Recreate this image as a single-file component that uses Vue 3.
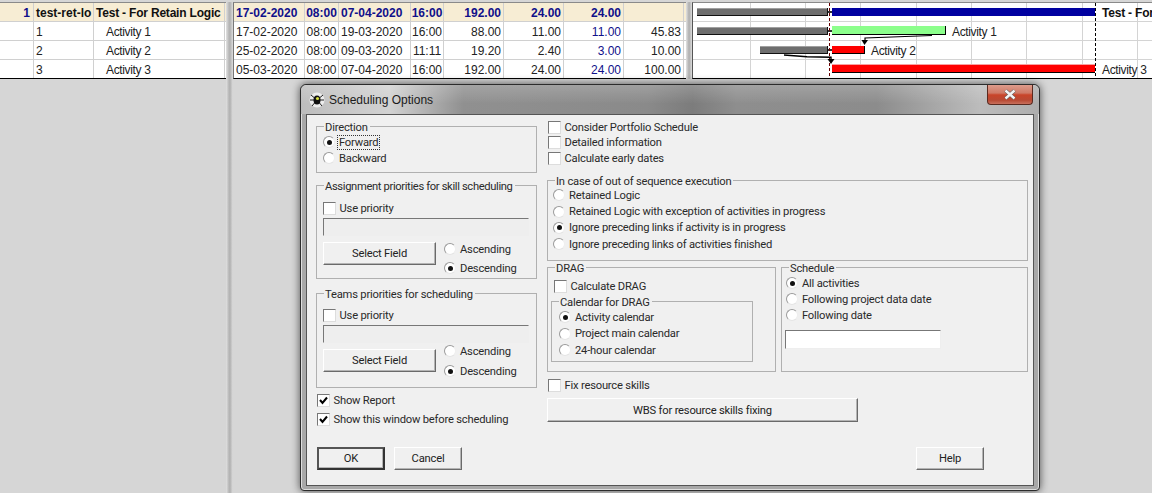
<template>
  <div class="screen">
    <div class="panes">
      <div class="pane left">
        <div v-for="(row, i) in leftRows" :key="i" class="row" :class="{ head: i === 0 }">
          <div class="cell c-id">{{ row[0] }}</div>
          <div class="cell c-code">{{ row[1] }}</div>
          <div class="cell c-name" :class="{ indent: i > 0 }">{{ row[2] }}</div>
        </div>
      </div>
      <div class="splitter full"></div>
      <div class="pane mid">
        <div v-for="(row, i) in midRows" :key="i" class="row" :class="{ head: i === 0 }">
          <div class="cell c-date first">{{ row[0] }}</div>
          <div class="cell c-time">{{ row[1] }}</div>
          <div class="cell c-date">{{ row[2] }}</div>
          <div class="cell c-time short">{{ row[3] }}</div>
          <div class="cell c-num">{{ row[4] }}</div>
          <div class="cell c-num">{{ row[5] }}</div>
          <div class="cell c-num blue">{{ row[6] }}</div>
          <div class="cell c-num">{{ row[7] }}</div>
        </div>
      </div>
      <div class="splitter"></div>
      <div class="pane gantt">
        <svg width="459" height="75" viewBox="693 3 459 75" class="gantt-svg">
          <g stroke="#d4d4d4" stroke-width="1">
            <line v-for="x in gridX" :key="x" :x1="x + 0.5" y1="3" :x2="x + 0.5" y2="78" />
            <line x1="692" y1="21.5" x2="1152" y2="21.5" />
            <line x1="692" y1="40.5" x2="1152" y2="40.5" />
            <line x1="692" y1="59.5" x2="1152" y2="59.5" />
          </g>
          <g v-for="bar in grayBars" :key="bar.y">
            <rect :x="bar.x" :y="bar.y" :width="827 - bar.x" height="8" fill="#6e6e6e" />
            <rect :x="bar.x" :y="bar.y" :width="827 - bar.x" height="1" fill="#a0a0a0" />
            <rect :x="bar.x" :y="bar.y + 7" :width="827 - bar.x" height="1" fill="#111" />
            <rect x="827" :y="bar.y" width="1" height="8" fill="#111" />
            <rect x="828" :y="bar.y + 3" width="4" height="2" fill="#333" />
          </g>
          <rect x="832" y="8" width="263" height="8" fill="#0000a0" />
          <rect x="832" y="26" width="114" height="9" fill="#8cff8c" />
          <rect x="832" y="34" width="114" height="1" fill="#000" />
          <rect x="945" y="26" width="1" height="9" fill="#000" />
          <rect x="832" y="46" width="33" height="8" fill="#f00" />
          <rect x="832" y="53" width="33" height="1" fill="#000" />
          <rect x="864" y="46" width="1" height="8" fill="#000" />
          <rect x="832" y="64" width="263" height="1" fill="#f9a0a0" />
          <rect x="832" y="65" width="263" height="8" fill="#f00" />
          <rect x="832" y="72" width="263" height="1" fill="#000" />
          <line x1="829.5" y1="3" x2="829.5" y2="78" stroke="#600" stroke-dasharray="3 2" />
          <line x1="1095.5" y1="3" x2="1095.5" y2="78" stroke="#000" stroke-dasharray="3 2" />
          <path d="M932 35.5 L865 38 L865 41" fill="none" stroke="#000" stroke-width="1.2" />
          <path d="M861.5 40 L868 40 L864.5 45 Z" fill="#000" />
          <path d="M784 55 L807 56.8 L831 57.2 L831 60" fill="none" stroke="#000" stroke-width="1.4" />
          <path d="M827.5 59 L834.5 59 L831 64 Z" fill="#000" />
          <text x="1102" y="17" class="bar-label bold">Test - For</text>
          <text x="952" y="36" class="bar-label">Activity 1</text>
          <text x="871" y="55" class="bar-label">Activity 2</text>
          <text x="1102" y="74" class="bar-label">Activity 3</text>
        </svg>
      </div>
    </div>

    <div class="dialog">
      <div class="titlebar">
        <svg class="app-icon" width="16" height="16" viewBox="0 0 16 16">
          <circle cx="8" cy="8" r="7.5" fill="#fff" opacity="0.7" />
          <path d="M8 8 L2 3 M8 8 L14 3 M8 8 L1 8 M8 8 L15 8 M8 8 L3 14 M8 8 L13 14" stroke="#222" stroke-width="1" fill="none" />
          <ellipse cx="8" cy="8" rx="3.5" ry="4.5" fill="#111" />
          <circle cx="8.5" cy="6.5" r="1.6" fill="#d8e040" />
        </svg>
        <span class="title-text">Scheduling Options</span>
        <div class="close">
          <svg width="14" height="11" viewBox="0 0 14 11">
            <path d="M2.5 1.5 L11.5 9.5 M11.5 1.5 L2.5 9.5" stroke="#555" stroke-width="3.6" fill="none" />
            <path d="M2.5 1.5 L11.5 9.5 M11.5 1.5 L2.5 9.5" stroke="#f4f4f4" stroke-width="2.4" fill="none" />
          </svg>
        </div>
      </div>
      <div class="body">
        <div class="col-left">
          <div class="group g-direction">
            <span class="legend">Direction</span>
            <label class="opt"><span class="radio on"></span><span class="focus">Forward</span></label>
            <label class="opt"><span class="radio"></span>Backward</label>
          </div>

          <div class="group g-priority">
            <span class="legend tight">Assignment priorities for skill scheduling</span>
            <label class="opt"><span class="check"></span>Use priority</label>
            <div class="field-off"></div>
            <div class="select-row">
              <button class="btn btn-select">Select Field</button>
              <div class="order">
                <label class="opt"><span class="radio"></span>Ascending</label>
                <label class="opt"><span class="radio on"></span>Descending</label>
              </div>
            </div>
          </div>

          <div class="group g-priority g-teams">
            <span class="legend">Teams priorities for scheduling</span>
            <label class="opt"><span class="check"></span>Use priority</label>
            <div class="field-off"></div>
            <div class="select-row">
              <button class="btn btn-select">Select Field</button>
              <div class="order">
                <label class="opt"><span class="radio"></span>Ascending</label>
                <label class="opt"><span class="radio on"></span>Descending</label>
              </div>
            </div>
          </div>

          <div class="bottom-checks">
            <label class="opt"><span class="check"><svg width="9" height="9" viewBox="0 0 9 9"><path d="M1 4 L3.5 7 L8 1.5" fill="none" stroke="#000" stroke-width="2" /></svg></span>Show Report</label>
            <label class="opt"><span class="check"><svg width="9" height="9" viewBox="0 0 9 9"><path d="M1 4 L3.5 7 L8 1.5" fill="none" stroke="#000" stroke-width="2" /></svg></span>Show this window before scheduling</label>
          </div>

          <div class="actions">
            <button class="btn btn-action btn-default">OK</button>
            <button class="btn btn-action">Cancel</button>
          </div>
        </div>

        <div class="col-right">
          <div class="top-checks">
            <label class="opt"><span class="check"></span>Consider Portfolio Schedule</label>
            <label class="opt"><span class="check"></span>Detailed information</label>
            <label class="opt"><span class="check"></span>Calculate early dates</label>
          </div>

          <div class="group g-sequence">
            <span class="legend">In case of out of sequence execution</span>
            <label v-for="(item, i) in sequenceOptions" :key="item" class="opt">
              <span class="radio" :class="{ on: i === 2 }"></span>{{ item }}
            </label>
          </div>

          <div class="two-groups">
            <div class="group g-drag">
              <span class="legend">DRAG</span>
              <label class="opt"><span class="check"></span>Calculate DRAG</label>
              <div class="group g-calendar">
                <span class="legend">Calendar for DRAG</span>
                <label class="opt"><span class="radio on"></span>Activity calendar</label>
                <label class="opt"><span class="radio"></span>Project main calendar</label>
                <label class="opt"><span class="radio"></span>24-hour calendar</label>
              </div>
            </div>
            <div class="group g-schedule">
              <span class="legend">Schedule</span>
              <label class="opt"><span class="radio on"></span>All activities</label>
              <label class="opt"><span class="radio"></span>Following project data date</label>
              <label class="opt"><span class="radio"></span>Following date</label>
              <div class="field-date"></div>
            </div>
          </div>

          <label class="opt fix-row"><span class="check"></span>Fix resource skills</label>
          <button class="btn btn-wbs">WBS for resource skills fixing</button>
          <div class="help-row">
            <button class="btn btn-action">Help</button>
          </div>
        </div>
      </div>
    </div>
  </div>
</template>

<script setup>
const leftRows = [
  ['1', 'test-ret-lo', 'Test - For Retain Logic'],
  ['', '1', 'Activity 1'],
  ['', '2', 'Activity 2'],
  ['', '3', 'Activity 3']
]

const midRows = [
  ['17-02-2020', '08:00', '07-04-2020', '16:00', '192.00', '24.00', '24.00', ''],
  ['17-02-2020', '08:00', '19-03-2020', '16:00', '88.00', '11.00', '11.00', '45.83'],
  ['25-02-2020', '08:00', '09-03-2020', '11:11', '19.20', '2.40', '3.00', '10.00'],
  ['05-03-2020', '08:00', '07-04-2020', '16:00', '192.00', '24.00', '24.00', '100.00']
]

const gridX = [750, 805, 860, 916, 971, 1026, 1082, 1137]

const grayBars = [
  { x: 697, y: 8 },
  { x: 697, y: 27 },
  { x: 760, y: 46 }
]

const sequenceOptions = [
  'Retained Logic',
  'Retained Logic with exception of activities in progress',
  'Ignore preceding links if activity is in progress',
  'Ignore preceding links of activities finished'
]
</script>

<style>
html, body {
  margin: 0;
  background: #d6d6d6;
}
</style>

<style scoped>
.screen {
  position: relative;
  width: 1152px;
  height: 493px;
  overflow: hidden;
  background: #d6d6d6;
  font-family: "Liberation Sans", Arial, sans-serif;
  font-size: 12px;
  color: #222;
}

.panes {
  display: flex;
  align-items: flex-start;
  height: 493px;
  padding-top: 2px;
  box-sizing: border-box;
}

.pane {
  height: 77px;
  background: #fff;
  border-top: 1px solid #8a8a8a;
  border-bottom: 1px solid #000;
  box-sizing: border-box;
  overflow: hidden;
}

.left { width: 226px; }
.mid { width: 453px; border-left: 1px solid #777; }
.gantt { flex: 1; border-left: 1px solid #555; }
.gantt-svg { display: block; }

.splitter {
  width: 6px;
  height: 77px;
  background: linear-gradient(90deg, #e2e2e2, #b4b4b4 45%, #b4b4b4 60%, #dcdcdc);
}

.splitter.full {
  width: 7px;
  height: 491px;
}

.row {
  display: flex;
  height: 19px;
  box-sizing: border-box;
  border-bottom: 1px solid #d0d0d0;
  line-height: 20px;
}

.row:last-child {
  height: 18px;
  border-bottom: 0;
}

.row.head {
  background: #f7edd4;
  font-weight: bold;
  color: #111;
}

.mid .row.head { color: #10108a; }

.cell {
  box-sizing: border-box;
  border-right: 1px solid #d0d0d0;
  white-space: nowrap;
  overflow: hidden;
  padding: 0 3px;
}

.c-id { width: 34px; text-align: right; }
.head .c-id { color: #10108a; }
.c-code { width: 60px; padding-left: 2px; }
.c-name { width: 131px; padding-left: 2px; letter-spacing: -0.2px; }
.c-name.indent { padding-left: 12px; letter-spacing: -0.35px; }
.c-date { width: 72px; padding-left: 2px; }
.c-date.first { width: 71px; }
.c-time { width: 34px; text-align: center; padding: 0; }
.c-time.short { width: 33px; }
.c-num { width: 60px; text-align: right; padding-right: 2px; }
.blue { color: #10108a; }

.bar-label {
  font-size: 12px;
  fill: #222;
  letter-spacing: -0.35px;
  font-family: "Liberation Sans", Arial, sans-serif;
}

.bar-label.bold { font-weight: bold; fill: #111; letter-spacing: -0.2px; }

.dialog {
  position: absolute;
  left: 300px;
  top: 84px;
  width: 740px;
  height: 407px;
  box-sizing: border-box;
  border: 1px solid #2c2c2c;
  border-radius: 6px 6px 4px 4px;
  background: #a8a8a8;
  box-shadow: 0 0 9px rgba(0, 0, 0, 0.65), inset 0 0 0 1px #dedede;
  padding: 0 5px 4px;
  font-family: Roboto, "Liberation Sans", sans-serif;
  font-size: 11.2px;
  letter-spacing: -0.2px;
  color: #2a2a2a;
}

.titlebar {
  display: flex;
  align-items: center;
  height: 29px;
  margin: 0 -5px;
  padding: 0 6px 0 8px;
  border-radius: 6px 6px 0 0;
  background:
    linear-gradient(rgba(255, 255, 255, 0.18), rgba(255, 255, 255, 0) 65%),
    linear-gradient(90deg, #bdbdbd 0%, #d2d2d2 12%, #909090 22%, #8a8a8a 47%, #7c7c7c 53%, #8e8e8e 59%, #8c8c8c 78%, #bcbcbc 92%, #aeaeae 100%);
  position: relative;
}

.app-icon { margin-right: 4px; }

.title-text {
  font-family: "Liberation Sans", Arial, sans-serif;
  font-size: 12px;
  letter-spacing: 0;
  color: #1a1a1a;
}

.close {
  position: absolute;
  right: 6px;
  top: 0;
  width: 46px;
  height: 20px;
  border: 1px solid #5a2a20;
  border-top: 0;
  border-radius: 0 0 4px 4px;
  box-sizing: border-box;
  background: linear-gradient(#dd9c8c 0%, #cf7a66 42%, #c9452a 52%, #b84a34 80%, #c8705c 100%);
  display: flex;
  align-items: center;
  justify-content: center;
}

.body {
  display: flex;
  gap: 10px;
  height: 372px;
  box-sizing: border-box;
  padding: 11px 6px 0 9px;
  background: #f0f0f0;
  border: 1px solid #555;
}

.col-left {
  width: 221px;
  flex: none;
  display: flex;
  flex-direction: column;
}

.col-right {
  width: 481px;
  flex: none;
  display: flex;
  flex-direction: column;
}

.group {
  position: relative;
  box-sizing: border-box;
  border: 1px solid #b0b0b0;
}

.legend {
  position: absolute;
  top: -6px;
  left: 7px;
  padding: 0 2px 0 1px;
  line-height: 14px;
  background: #f0f0f0;
  white-space: nowrap;
}

.legend.tight { letter-spacing: -0.35px; }

.opt {
  display: flex;
  align-items: center;
  height: 16px;
  white-space: nowrap;
}

.radio {
  flex: none;
  width: 12px;
  height: 12px;
  margin-right: 4px;
  box-sizing: border-box;
  border-radius: 50%;
  border: 1px solid #9a9a9a;
  border-right-color: #eee;
  border-bottom-color: #e4e4e4;
  background: #fff;
  display: flex;
  align-items: center;
  justify-content: center;
}

.radio.on::after {
  content: "";
  width: 5px;
  height: 5px;
  border-radius: 50%;
  background: #111;
}

.check {
  flex: none;
  width: 13px;
  height: 13px;
  margin-right: 3.5px;
  box-sizing: border-box;
  border: 1px solid #777;
  border-right-color: #ddd;
  border-bottom-color: #ddd;
  background: #fff;
  display: flex;
  align-items: center;
  justify-content: center;
}

.focus { outline: 1px dotted #333; padding: 0 1px; margin-left: -1px; }

.btn {
  font: inherit;
  letter-spacing: inherit;
  color: #222;
  background: #f0f0f0;
  border: 1px solid;
  border-color: #fff #6a6a6a #6a6a6a #fff;
  box-shadow: inset -1px -1px 0 #b4b4b4;
  padding: 0;
  box-sizing: border-box;
}

.g-direction {
  height: 47px;
  padding: 7px 0 0 6px;
}

.g-priority {
  height: 94px;
  margin-top: 12px;
  padding: 14px 6px 0;
}

.g-teams {
  margin-top: 14px;
  height: 95px;
  padding-top: 13px;
}

.field-off {
  height: 18px;
  margin-top: 2px;
  width: 206px;
  box-sizing: border-box;
  border: 1px solid;
  border-color: #777 #eee #eee #777;
  background: #eee;
}

.select-row {
  display: flex;
  margin-top: 6px;
}

.btn-select { width: 113px; height: 23px; }

.order {
  margin: -1px 0 0 8px;
  display: flex;
  flex-direction: column;
  gap: 3px;
}

.g-teams .order {
  margin-top: -6px;
  gap: 4px;
}

.bottom-checks {
  margin-top: 4px;
  padding-left: 1px;
  display: flex;
  flex-direction: column;
  gap: 3px;
}

.actions {
  display: flex;
  gap: 9px;
  margin-top: 20px;
  padding-left: 1px;
}

.btn-action { width: 68px; height: 23px; }
.btn-default { border: 2px solid; border-color: #555 #333 #333 #555; }

.top-checks {
  display: flex;
  flex-direction: column;
  padding-left: 1px;
  margin-top: -6.5px;
}

.top-checks .opt { height: 15.5px; }

.g-sequence {
  height: 81px;
  margin-top: 14px;
  padding: 6px 0 0 5px;
}

.g-sequence .opt { height: 16.4px; }

.two-groups {
  display: flex;
  gap: 5px;
  margin-top: 6px;
}

.g-drag {
  width: 229px;
  height: 105px;
  padding: 10px 5px 0 6px;
}

.g-calendar {
  width: 202px;
  height: 61px;
  margin: 7px 0 0 -3px;
  padding: 7px 0 0 7px;
}

.g-calendar .opt { height: 16.5px; }

.g-schedule {
  width: 247px;
  height: 105px;
  padding: 7px 4px 0;
}

.field-date {
  height: 19px;
  width: 156px;
  margin: 7px 0 0 -1px;
  box-sizing: border-box;
  background: #fff;
  border: 1px solid;
  border-color: #777 #eee #eee #777;
}

.fix-row { margin-top: 5px; padding-left: 1px; }

.btn-wbs {
  width: 311px;
  height: 24px;
  margin-top: 5px;
}

.help-row {
  margin-top: 25px;
  padding-left: 369px;
}
</style>
